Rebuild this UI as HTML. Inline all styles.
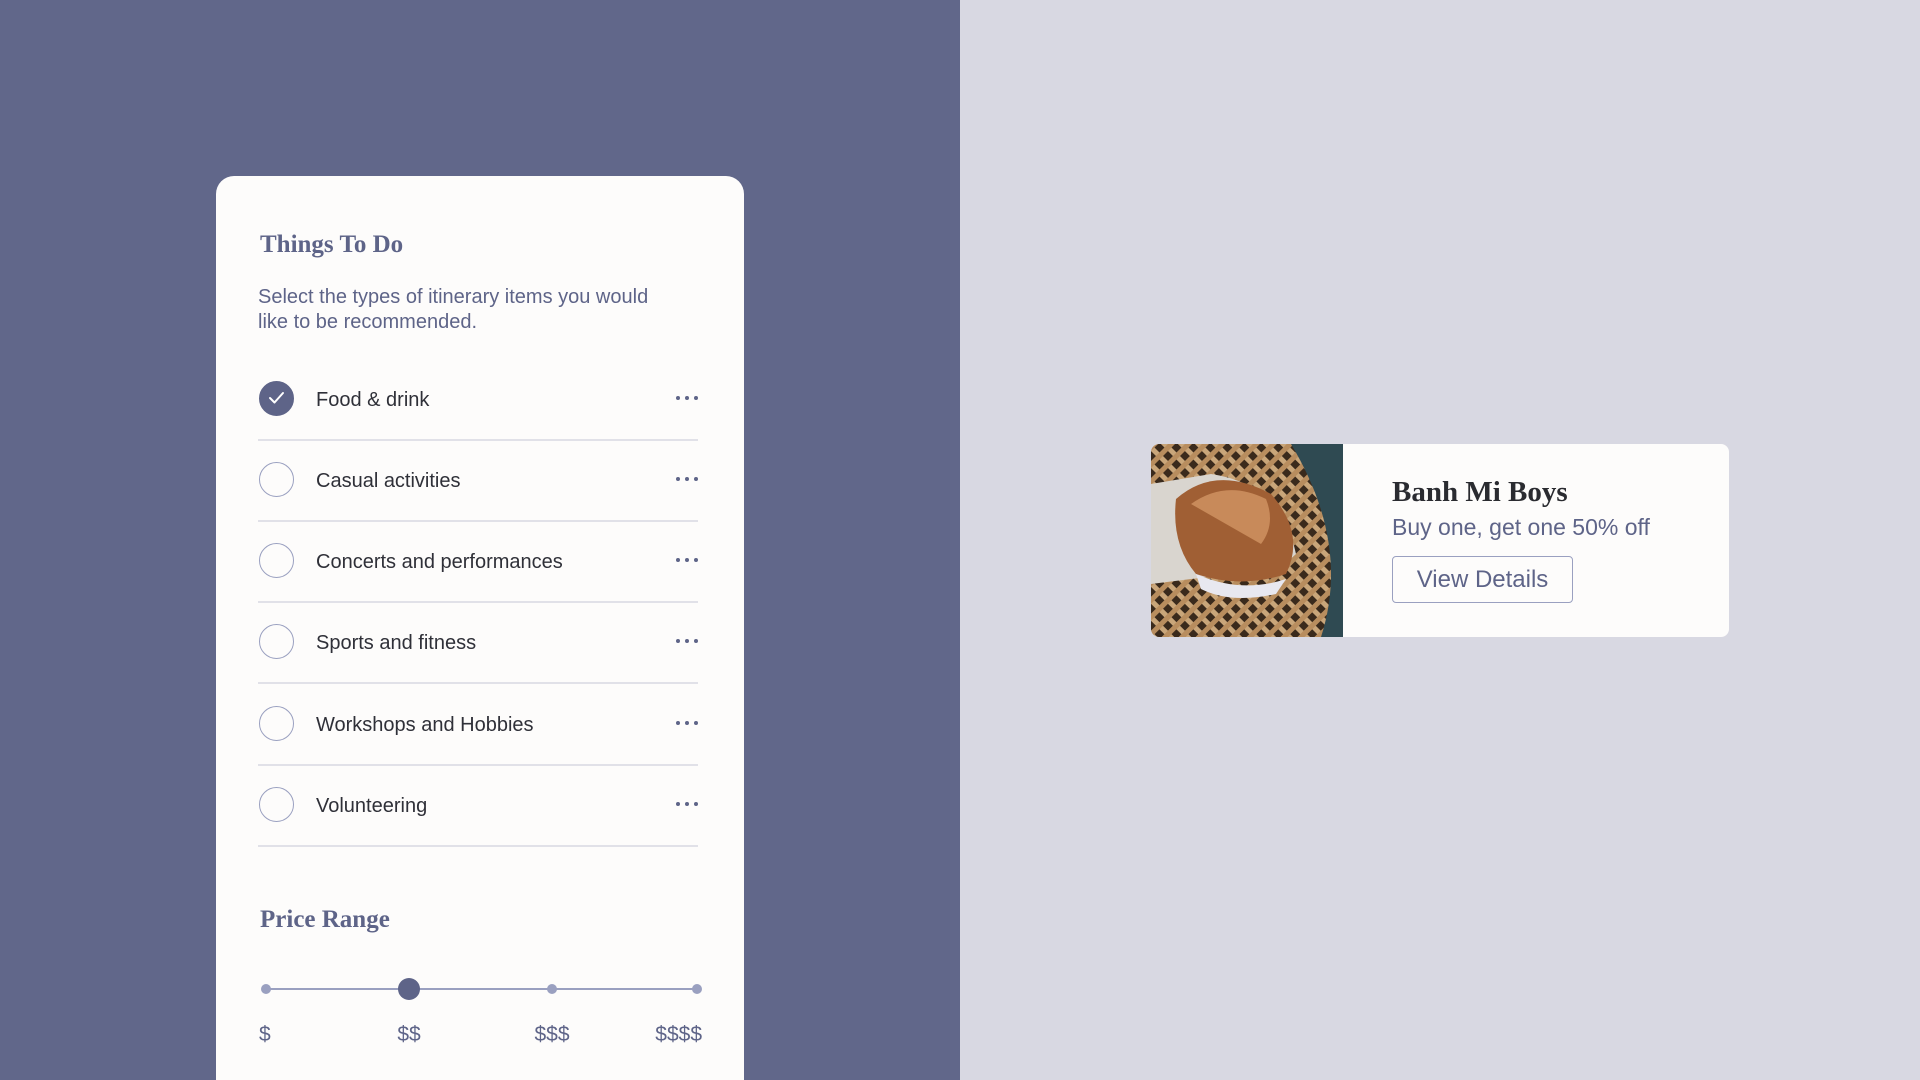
<!DOCTYPE html>
<html style="overflow:hidden"><head><style>
*{margin:0;padding:0;box-sizing:border-box}
html,body{width:1920px;height:1080px;overflow:hidden}
body{position:relative;background:#d8d8e2;font-family:"Liberation Sans",sans-serif}
.left{position:absolute;left:0;top:0;width:960px;height:1080px;background:#61678a}
.card{position:absolute;left:216px;top:176px;width:528px;height:904px;background:#fdfcfb;border-radius:18px 18px 0 0}
.abs{position:absolute;white-space:nowrap}
.h{font-family:"Liberation Serif",serif;font-weight:bold;color:#5e6488;font-size:25px}
.desc{color:#5e6488;font-size:20px;line-height:25px}
.row{position:absolute;left:258px;width:440px;height:81px}
.row .c{position:absolute;left:1px;top:-17.5px;width:35px;height:35px;border-radius:50%;border:1.5px solid #9aa0c0}
.row .t{position:absolute;left:58px;top:-9px;font-size:20px;color:#2f3038}
.row .d{position:absolute;right:0;top:-2px;width:22px;height:5px}
.row .d i{position:absolute;top:0;width:4px;height:4px;border-radius:50%;background:#5e6488}
.row .l{position:absolute;left:0;top:41px;width:440px;height:2px;background:#e1e1e8}
.lbl{position:absolute;top:1023px;font-size:21px;color:#5e6488;width:80px;text-align:center}
</style></head><body>
<div class="left"></div>
<div class="card"></div>
<div class="abs h" style="left:260px;top:231px">Things To Do</div>
<div class="abs desc" style="left:258px;top:285px">Select the types of itinerary items you would<br>like to be recommended.</div>

<div class="row" style="top:398px"><div class="c" style="background:#5e6488;border-color:#5e6488"><svg width="35" height="35" viewBox="0 0 35 35" style="position:absolute;left:-1.5px;top:-1.5px"><path d="M11 18l4.5 4.5L24 13" fill="none" stroke="#fff" stroke-width="2" stroke-linecap="round" stroke-linejoin="round"/></svg></div><div class="t">Food &amp; drink</div><div class="d"><i style="left:0"></i><i style="left:9px"></i><i style="left:18px"></i></div><div class="l"></div></div>
<div class="row" style="top:479px"><div class="c"></div><div class="t">Casual activities</div><div class="d"><i style="left:0"></i><i style="left:9px"></i><i style="left:18px"></i></div><div class="l"></div></div>
<div class="row" style="top:560px"><div class="c"></div><div class="t">Concerts and performances</div><div class="d"><i style="left:0"></i><i style="left:9px"></i><i style="left:18px"></i></div><div class="l"></div></div>
<div class="row" style="top:641px"><div class="c"></div><div class="t">Sports and fitness</div><div class="d"><i style="left:0"></i><i style="left:9px"></i><i style="left:18px"></i></div><div class="l"></div></div>
<div class="row" style="top:723px"><div class="c"></div><div class="t">Workshops and Hobbies</div><div class="d"><i style="left:0"></i><i style="left:9px"></i><i style="left:18px"></i></div><div class="l"></div></div>
<div class="row" style="top:804px"><div class="c"></div><div class="t">Volunteering</div><div class="d"><i style="left:0"></i><i style="left:9px"></i><i style="left:18px"></i></div><div class="l"></div></div>

<div class="abs h" style="left:260px;top:906px">Price Range</div>
<svg class="abs" style="left:250px;top:975px" width="460" height="30">
<line x1="16" y1="14" x2="447" y2="14" stroke="#9aa0c0" stroke-width="2"/>
<circle cx="16" cy="14" r="5" fill="#9aa0c0"/>
<circle cx="302" cy="14" r="5" fill="#9aa0c0"/>
<circle cx="447" cy="14" r="5" fill="#9aa0c0"/>
<circle cx="159" cy="14" r="11" fill="#5e6488"/>
</svg>
<div class="lbl" style="left:259px;text-align:left">$</div>
<div class="lbl" style="left:369px">$$</div>
<div class="lbl" style="left:512px">$$$</div>
<div class="lbl" style="left:622px;text-align:right">$$$$</div>

<div class="abs" style="left:1151px;top:444px;width:578px;height:193px;background:#fdfcfb;border-radius:8px;overflow:hidden">
<svg width="192" height="193" style="position:absolute;left:0;top:0">
<defs><pattern id="w" width="12" height="12" patternUnits="userSpaceOnUse" patternTransform="rotate(45)"><rect width="12" height="12" fill="#3a2a1c"/><rect width="12" height="5" fill="#c9a67a"/><rect width="5" height="12" fill="#b88d5e"/></pattern></defs>
<rect width="192" height="193" fill="url(#w)"/>
<path d="M140 0 L192 0 L192 193 L170 193 Q200 100 140 0Z" fill="#2f4a52"/>
<path d="M0 40 L60 30 Q130 40 145 110 Q120 135 80 130 L0 140Z" fill="#d9d5cf"/>
<path d="M25 55 Q65 20 120 50 Q155 90 135 130 Q90 145 45 130 Q20 100 25 55Z" fill="#a05f34"/>
<path d="M40 60 Q75 35 115 55 Q125 80 110 100 Q75 80 40 60Z" fill="#c88a5a"/>
<path d="M45 130 Q90 150 135 135 L125 150 Q80 160 50 145Z" fill="#e8e8f0"/>
</svg>
</div>
<div class="abs" style="left:1392px;top:476px;font-family:'Liberation Serif',serif;font-weight:bold;font-size:29px;color:#2a2b30">Banh Mi Boys</div>
<div class="abs" style="left:1392px;top:514px;font-size:23px;color:#5e6488">Buy one, get one 50% off</div>
<div class="abs" style="left:1392px;top:556px;width:181px;height:47px;border:1.5px solid #9aa0c0;border-radius:4px;font-size:24px;color:#5e6488;text-align:center;line-height:46px">View Details</div>
</body></html>
